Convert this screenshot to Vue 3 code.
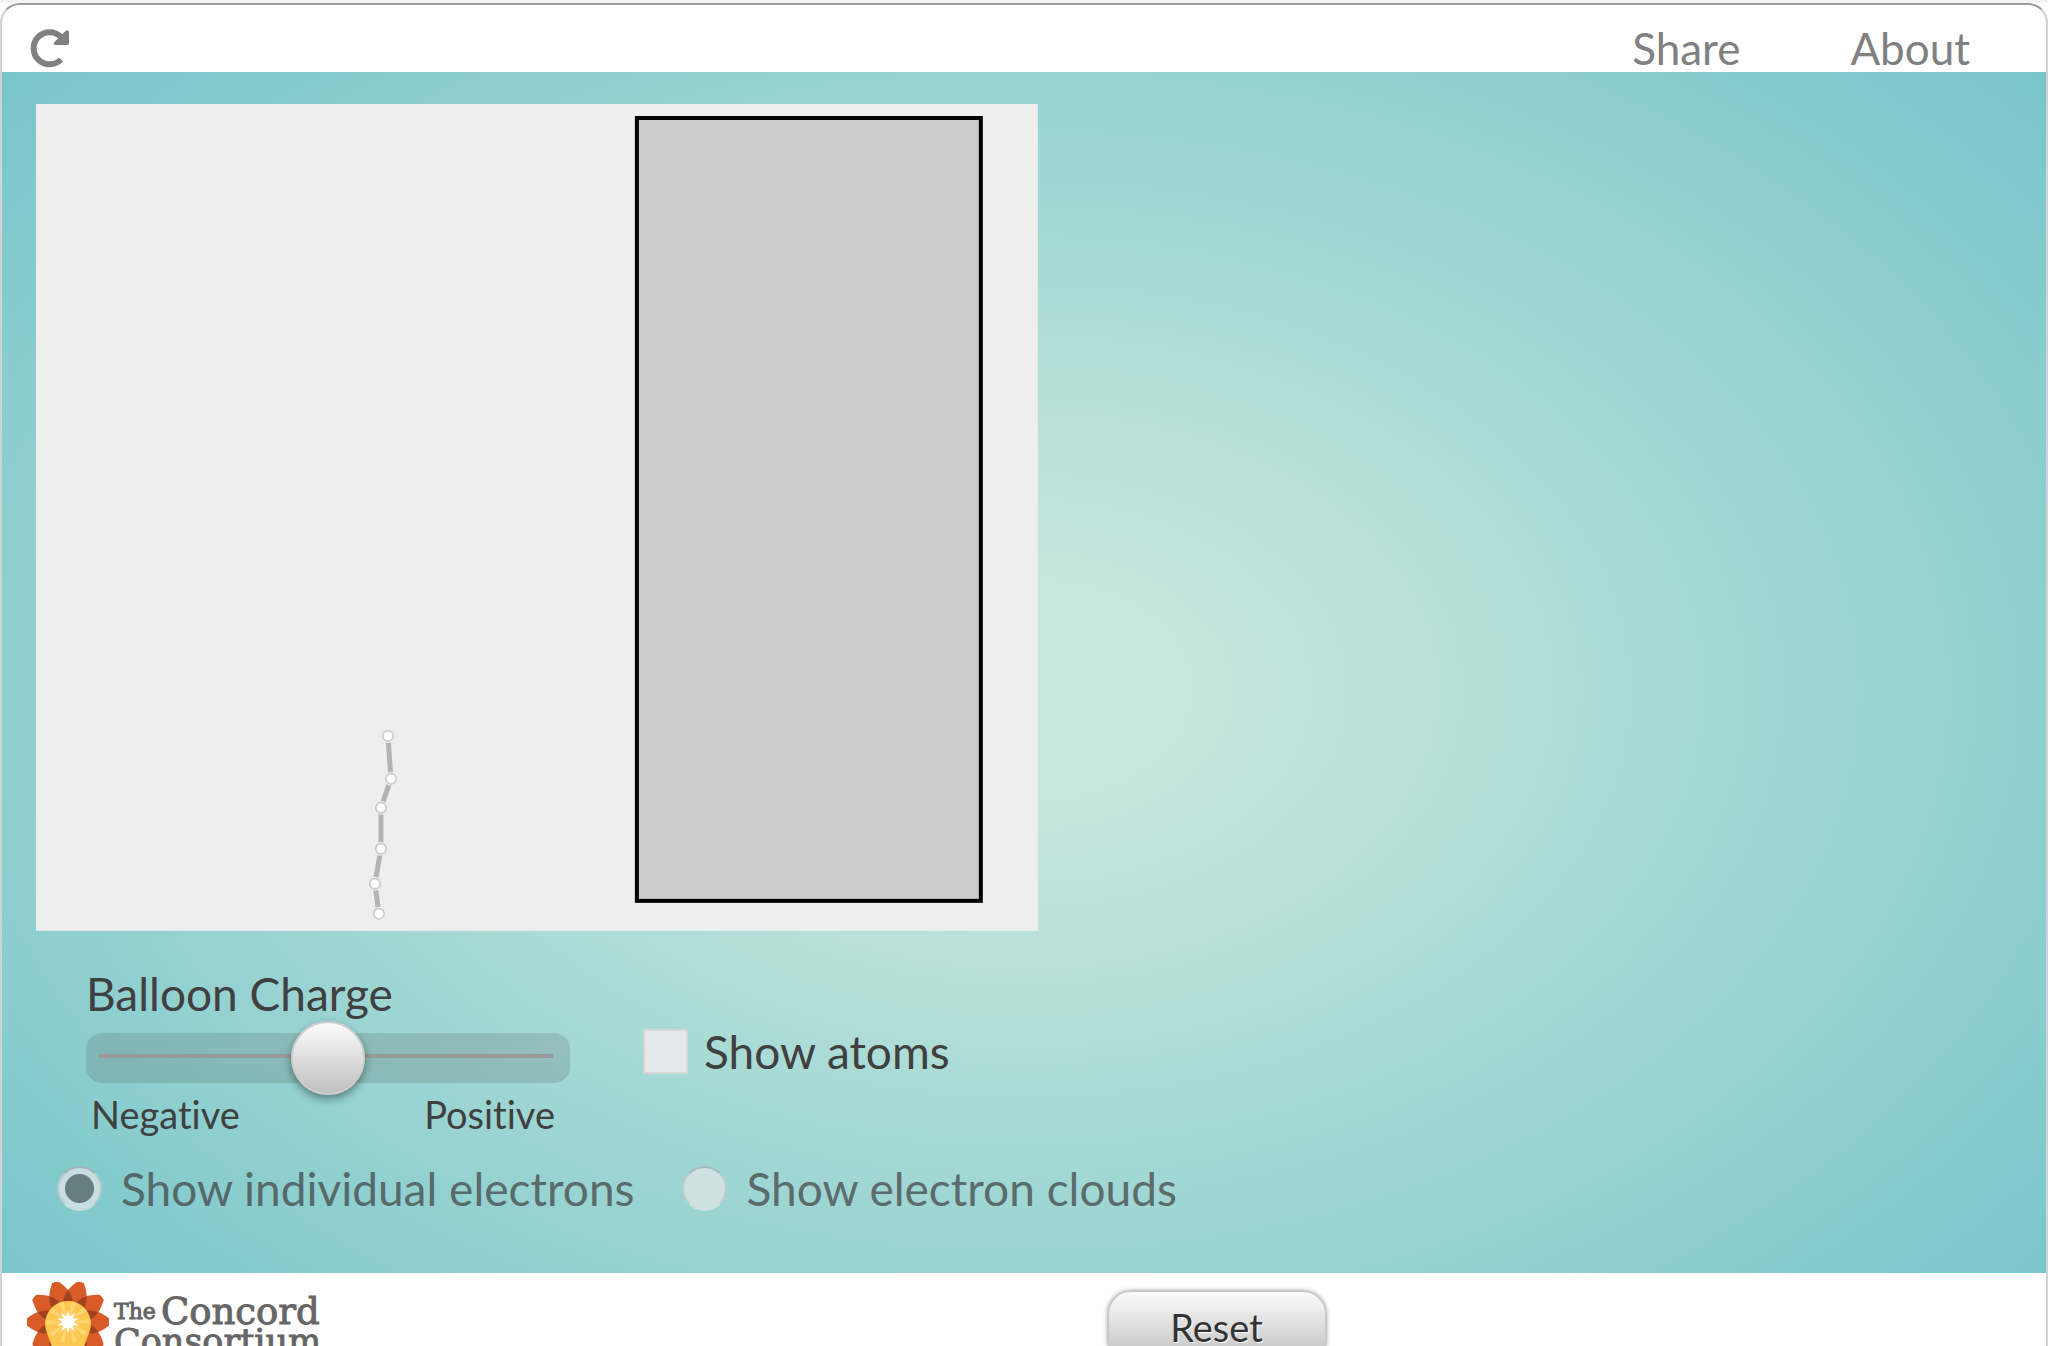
<script setup>
import { ref } from 'vue'

const charge = ref(50)
const showAtoms = ref(false)
const mode = ref('electrons')

const beads = [
  [352, 632],
  [355, 675],
  [345, 704],
  [345, 745],
  [339, 780],
  [343, 810],
]
const petals = [0, 1, 2, 3, 4, 5, 6, 7, 8, 9]
</script>

<template>
  <div class="page">
    <div class="frame">
      <header class="top">
        <button class="reload" type="button" aria-label="Reload">
          <svg viewBox="0 0 40 40" width="40" height="40">
            <path d="M31 30.500A16 16 0 1 1 31 8" fill="none" stroke="#808080" stroke-width="6" />
            <path d="M39 3V14.500Q39 16 37 16H25Q23 15.500 24 13.500L35.500 2Q38 0 39 3Z" fill="#808080" />
          </svg>
        </button>
        <nav class="links">
          <a href="#share">Share</a>
          <a href="#about">About</a>
        </nav>
      </header>

      <main class="lab">
        <svg class="model" viewBox="0 0 1002 827">
          <rect width="1002" height="827" fill="#eee" />
          <rect x="601" y="14" width="344" height="783" fill="#ccc" stroke="#000" stroke-width="4" />
          <polyline :points="beads.join(' ')" fill="none" stroke="#b3b3b3" stroke-width="5" />
          <g v-for="(b, i) in beads" :key="i">
            <circle :cx="b[0]" :cy="b[1]" r="7" fill="#eee" />
            <circle :cx="b[0]" :cy="b[1]" r="6" fill="#c2c2c2" />
            <circle :cx="b[0]" :cy="b[1]" r="5" fill="#dedede" />
            <circle :cx="b[0]" :cy="b[1]" r="4" fill="#fff" />
          </g>
        </svg>

        <div class="controls">
          <div class="slider">
            <label for="charge">Balloon Charge</label>
            <input id="charge" v-model="charge" type="range" min="0" max="100" />
            <div class="ends"><span>Negative</span><span>Positive</span></div>
          </div>
          <label class="option atoms">
            <input v-model="showAtoms" type="checkbox" />
            <span>Show atoms</span>
          </label>
        </div>

        <div class="modes">
          <label class="option">
            <input v-model="mode" type="radio" name="mode" value="electrons" disabled />
            <span>Show individual electrons</span>
          </label>
          <label class="option">
            <input v-model="mode" type="radio" name="mode" value="clouds" disabled />
            <span>Show electron clouds</span>
          </label>
        </div>
      </main>

      <footer class="bottom">
        <a class="logo" href="#concord">
          <svg viewBox="-41 -40 82 82" width="82" height="82">
            <g v-for="p in petals" :key="p" :transform="`rotate(${p * 36 + 18})`">
              <path d="M0 0L-11 -26Q-10 -33 -3 -42H3Q10 -33 11 -26Z" fill="#d95b27" />
            </g>
            <g v-for="p in petals" :key="'d' + p" :transform="`rotate(${p * 36})`">
              <path d="M-5 -21Q-4 -27 0 -32Q4 -27 5 -21Z" fill="#a24320" />
            </g>
            <path d="M-23 2A23 23 0 1 1 23 2C22 14 15 20 14 38H-14C-15 20 -22 14 -23 2Z" fill="#fdc651" />
            <g v-for="p in petals" :key="'r' + p" :transform="`rotate(${p * 36 + 18})`">
              <path d="M0 0L-3 -21H2Z" fill="#fdd670" />
            </g>
            <g v-for="p in petals" :key="'s' + p" :transform="`rotate(${p * 36})`">
              <path d="M-3 0L0 -12L3 0Z" fill="#fff" />
            </g>
            <circle r="6" fill="#fff" />
          </svg>
          <span class="name">
            <span class="line"><small>The</small><b>Concord</b></span>
            <span>Consortium</span>
          </span>
        </a>
        <button class="reset" type="button">Reset</button>
      </footer>
    </div>
  </div>
</template>

<style>
body {
  overflow: hidden;
}
</style>

<style scoped>
.page {
  box-sizing: border-box;
  height: 100vh;
  overflow: hidden;
  border-top: 3px solid #f3f3f3;
  background: #fff;
  color: #404040;
  font: 46px/56px Lato, sans-serif;
  font-variant-ligatures: none;
}
.frame {
  box-sizing: border-box;
  min-height: 100%;
  border: 2px solid #ced3d3;
  border-top-color: #999d9d;
  border-radius: 20px;
  overflow: hidden;
  background: radial-gradient(ellipse at center, #c8e8dd 10%, #73c3c9 100%);
}
.top {
  display: flex;
  align-items: center;
  justify-content: space-between;
  height: 67px;
  padding: 0 76px 0 28px;
  background: #fff;
}
.reload {
  display: flex;
  padding: 0;
  border: 0;
  margin-top: 20px;
  background: none;
}
.links {
  display: flex;
  gap: 110px;
  margin-top: 18px;
  font-size: 44px;
}
.links a {
  color: #808080;
  text-decoration: none;
}
.lab {
  box-sizing: border-box;
  padding: 32px 34px 56px;
}
.model {
  display: block;
  width: 50.700%;
}
.controls {
  display: flex;
  gap: 73px;
  padding: 35px 50px 0;
}
.slider {
  width: 484px;
}
.slider > label {
  display: block;
}
.slider input {
  appearance: none;
  display: block;
  width: 100%;
  height: 50px;
  margin: 11px 0;
  border-radius: 16px;
  background: linear-gradient(#999, #999) 13px 21px / 454px 4px no-repeat, rgba(96, 112, 112, 0.25);
}
.slider input::-webkit-slider-thumb {
  appearance: none;
  box-sizing: border-box;
  width: 74px;
  height: 74px;
  border: 2px solid #ccc;
  border-radius: 50%;
  background: linear-gradient(#fcfcfc, #c0c0c0);
  box-shadow: 0 4px 8px rgba(0, 0, 0, 0.4);
}
.ends {
  display: flex;
  justify-content: space-between;
  padding: 0 15px 0 5px;
  font-size: 38px;
  line-height: 40px;
}
.option {
  display: flex;
  align-items: center;
}
.atoms {
  align-self: flex-start;
  margin-top: 58px;
  gap: 16px;
}
.option input {
  appearance: none;
  box-sizing: border-box;
  width: 45px;
  height: 45px;
  margin: 0;
  border: 2px solid #d4d6d7;
  background: #e6e7e8;
}
.modes {
  display: flex;
  gap: 48px;
  padding: 27px 21px 0;
}
.modes .option {
  gap: 19px;
  opacity: 0.7;
}
.modes input {
  border-color: #a5b0b0 #c8cccc #e0e4e4;
  border-radius: 50%;
}
.modes input:checked {
  background: radial-gradient(circle, #595f60 14px, #e6e7e8 15px);
}
.bottom {
  display: flex;
  justify-content: space-between;
  padding: 9px 35.200% 12px 25px;
  background: #fff;
}
.logo {
  display: flex;
  gap: 5px;
  color: #666;
  font-family: "DejaVu Serif", serif;
  text-decoration: none;
  -webkit-text-stroke: 1px #666;
}
.name {
  display: flex;
  flex-direction: column;
  padding-top: 14px;
  font-size: 35px;
  line-height: 29px;
}
.line {
  display: flex;
  align-items: center;
  gap: 5px;
  height: 32px;
}
.name small {
  font-size: 22px;
}
.name b {
  font-size: 37px;
  font-weight: 400;
}
.reset {
  width: 220px;
  height: 74px;
  margin-top: 8px;
  padding: 0;
  border: 2px solid #c8c8c8;
  border-radius: 24px;
  background: linear-gradient(#fbfbfb, #bfbfbf);
  box-shadow: 0 0 4px rgba(0, 0, 0, 0.3);
  color: #333;
  font: 38px/40px Lato, sans-serif;
  text-shadow: 1px 1px 0 #fff;
}
</style>
